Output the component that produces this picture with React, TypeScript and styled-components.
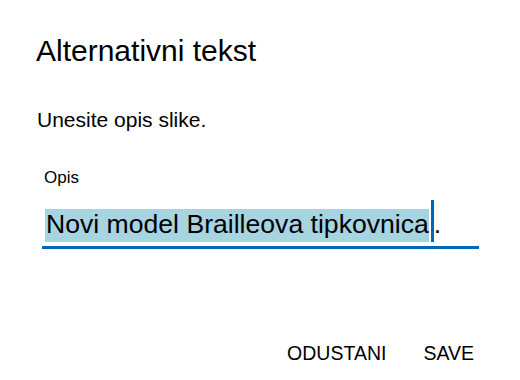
import React from "react";
import styled, { createGlobalStyle } from "styled-components";

const Global = createGlobalStyle`
  html, body { margin: 0; padding: 0; background: #ffffff; }
  body { font-family: "Liberation Sans", Arial, sans-serif; color: #000; }
`;

const Dialog = styled.div`
  width: 520px;
  height: 380px;
  box-sizing: border-box;
  padding: 34px 46px 0 36px;
  display: flex;
  flex-direction: column;
  background: #fff;
`;

const Title = styled.h1`
  margin: 0;
  font-size: 30px;
  line-height: 34px;
  font-weight: 400;
`;

const Subtitle = styled.p`
  margin: 40px 0 0 1px;
  font-size: 21px;
  line-height: 24px;
`;

const Label = styled.label`
  margin: 36px 0 0 8px;
  font-size: 17px;
  line-height: 20px;
`;

const Field = styled.div`
  margin: 12px 0 0 6px;
  width: 437px;
  box-sizing: border-box;
  display: flex;
  align-items: flex-end;
  padding: 0 0 4px 3px;
  border-bottom: 3px solid #0067b8;
  font-size: 26.6px;
`;

const Selected = styled.span`
  display: inline-block;
  background: #a6d4e0;
  line-height: 30px;
  padding: 0 0 3px 1px;
  white-space: pre;
`;

const Caret = styled.span`
  display: inline-block;
  width: 3px;
  height: 42px;
  background: #0067b8;
  margin: 0 0 0 2px;
`;

const Rest = styled.span`
  display: inline-block;
  line-height: 30px;
  padding-bottom: 3px;
`;

const Actions = styled.div`
  margin-top: auto;
  margin-bottom: 16px;
  display: flex;
  justify-content: flex-end;
  gap: 37px;
`;

const Action = styled.button`
  border: none;
  background: none;
  padding: 0;
  font-family: "Liberation Sans", Arial, sans-serif;
  font-size: 19.5px;
  line-height: 22px;
  color: #000;
  text-transform: uppercase;
  cursor: pointer;
`;

export default function App() {
  return (
    <>
      <Global />
      <Dialog>
        <Title>Alternativni tekst</Title>
        <Subtitle>Unesite opis slike.</Subtitle>
        <Label>Opis</Label>
        <Field>
          <Selected>Novi model Brailleova tipkovnica</Selected>
          <Caret />
          <Rest>.</Rest>
        </Field>
        <Actions>
          <Action>Odustani</Action>
          <Action>Save</Action>
        </Actions>
      </Dialog>
    </>
  );
}
